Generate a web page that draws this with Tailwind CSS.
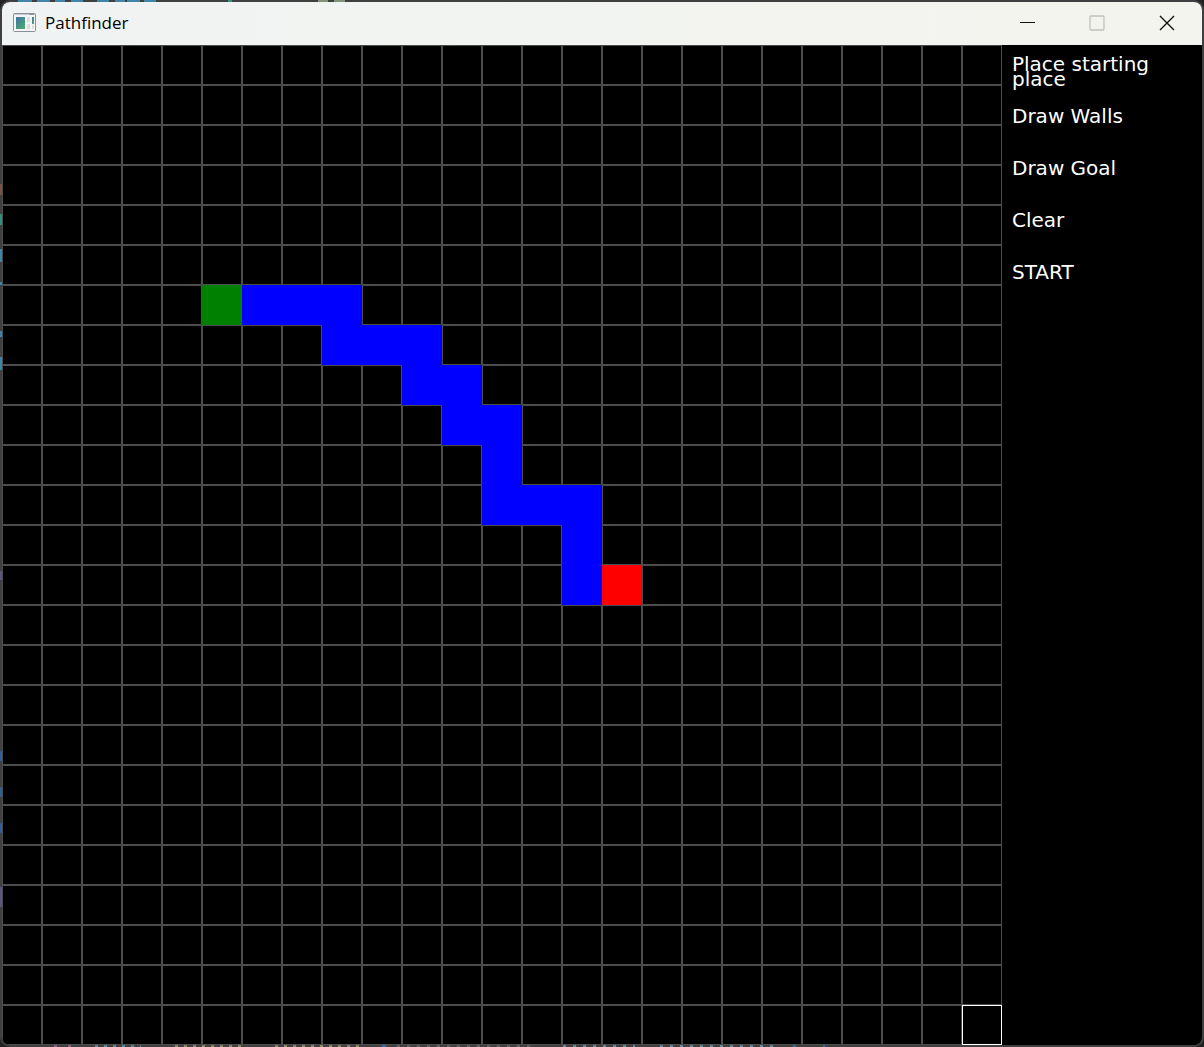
<!DOCTYPE html>
<html lang="en">
<head>
<meta charset="utf-8">
<title>Pathfinder</title>
<script src="https://cdn.jsdelivr.net/npm/@tailwindcss/browser@4"></script>
</head>
<body class="relative min-h-screen overflow-hidden bg-[#222222] p-0.5">
<main class="overflow-hidden rounded-[8px] bg-black font-['Open_Sans','Noto_Sans',sans-serif] ring-2 ring-[#404040]">
  <header class="flex h-[43px] items-center bg-linear-to-r from-[#f0f3f3] to-[#f4f4ee] pb-0.5 pl-[11px] text-black">
    <svg class="mr-2 h-5 w-6" viewBox="0 0 24 20" aria-hidden="true">
      <defs><linearGradient id="pane" x1="0" y1="0" x2="1" y2="1"><stop offset="0" stop-color="#3f74a8"/><stop offset="1" stop-color="#4fae6b"/></linearGradient></defs>
      <rect x=".5" y=".5" width="22" height="18" rx="1" fill="#f5f5f5" stroke="#8b8f98"/>
      <path d="M1 1.5h21" stroke="#c9ccd6"/>
      <path d="M16 1.5h5" stroke="#8f96aa"/>
      <rect x="3" y="4" width="9" height="12" fill="url(#pane)"/>
      <path d="M14 4h3v5h-3zM14 11h3v5h-3zM19 12h2v4h-2z" fill="#dedede"/>
      <rect x="19" y="4" width="2" height="7" fill="url(#pane)"/>
    </svg>
    <h1 class="flex-1 text-[17px] leading-6">Pathfinder</h1>
    <button class="flex h-full w-[70px] items-center justify-center" aria-label="Minimize">
      <svg class="size-4" viewBox="0 0 16 16" fill="none" stroke="#111"><path d="M1 7.5h15"/></svg>
    </button>
    <button class="flex h-full w-[70px] items-center justify-center" aria-label="Maximize" disabled>
      <svg class="size-4" viewBox="0 0 16 16" fill="none" stroke="#c0c1bc" stroke-width="1.3"><rect x="1" y="1" width="14" height="14" rx="1"/></svg>
    </button>
    <button class="flex h-full w-[70px] items-center justify-center" aria-label="Close">
      <svg class="size-4" viewBox="0 0 16 16" fill="none" stroke="#111" stroke-width="1.4"><path d="M1 1l14 14M15 1L1 15"/></svg>
    </button>
  </header>
  <div class="flex">
    <div id="board" class="grid flex-1 grid-cols-[repeat(25,minmax(0,1fr))]"></div>
    <nav class="flex w-[200px] flex-col font-['DejaVu_Sans',sans-serif] text-[20px] leading-[15px] text-white" aria-label="Tools">
      <button class="flex h-[52px] items-start px-2.5 pt-3 text-left">Place starting place</button>
      <button class="flex h-[52px] items-start px-2.5 pt-3 text-left">Draw Walls</button>
      <button class="flex h-[52px] items-start px-2.5 pt-3 text-left">Draw Goal</button>
      <button class="flex h-[52px] items-start px-2.5 pt-3 text-left">Clear</button>
      <button class="flex h-[52px] items-start px-2.5 pt-3 text-left">START</button>
    </nav>
  </div>
</main>
<!-- Slivers of the editor window lying behind the frame -->
<svg class="pointer-events-none absolute inset-0 size-full" viewBox="0 0 1204 1047" preserveAspectRatio="none" fill="none" stroke-width="2" aria-hidden="true">
  <path d="M18 1h14M37 1h13M55 1h10M71 1h12M97 1h12M115 1h10M127 1h13M144 1h12" stroke="#4085ab"/>
  <path d="M228 1h4" stroke="#3b8d82"/>
  <path d="M318 1h10M334 1h11" stroke="#84917b"/>
  <path d="M54 1046h3M68 1046h3" stroke="#866078"/>
  <path d="M95 1046h46" stroke="#56879c" stroke-dasharray="3 6"/>
  <path d="M175 1046h70M275 1046h90" stroke="#8b8768" stroke-dasharray="3 6"/>
  <path d="M382 1046h4M793 1046h3M823 1046h2" stroke="#3a68b0"/>
  <path d="M397 1046h135" stroke="#646068" stroke-dasharray="3 7"/>
  <path d="M563 1046h72M660 1046h120" stroke="#658896" stroke-dasharray="3 7"/>
  <path d="M1 184v11" stroke="#7d5141"/>
  <path d="M1 214v11" stroke="#338d83"/>
  <path d="M1 249v13M1 282v3M1 331v6M1 357v13" stroke="#3c86ac"/>
  <path d="M1 571v9M1 887v20" stroke="#62528a"/>
  <path d="M1 751v10M1 787v10M1 823v10" stroke="#2f609f"/>
</svg>
<script>
  const styles = {
    empty: 'aspect-square border border-[#4c4c4c]',
    path: 'aspect-square bg-[#0000ff]',
    start: 'aspect-square bg-[#008000]',
    goal: 'aspect-square bg-[#ff0000]',
    hover: 'aspect-square border border-white'
  };
  const state = { '6,5': 'start', '13,15': 'goal', '24,24': 'hover' };
  const runs = [[6, 6, 8], [7, 8, 10], [8, 10, 11], [9, 11, 12], [10, 12, 12], [11, 12, 14], [12, 14, 14], [13, 14, 14]];
  for (const [row, from, to] of runs)
    for (let col = from; col <= to; col++) state[row + ',' + col] = 'path';
  const board = document.getElementById('board');
  for (let row = 0; row < 25; row++)
    for (let col = 0; col < 25; col++) {
      const cell = document.createElement('div');
      cell.className = styles[state[row + ',' + col] || 'empty'];
      board.append(cell);
    }
</script>
</body>
</html>
